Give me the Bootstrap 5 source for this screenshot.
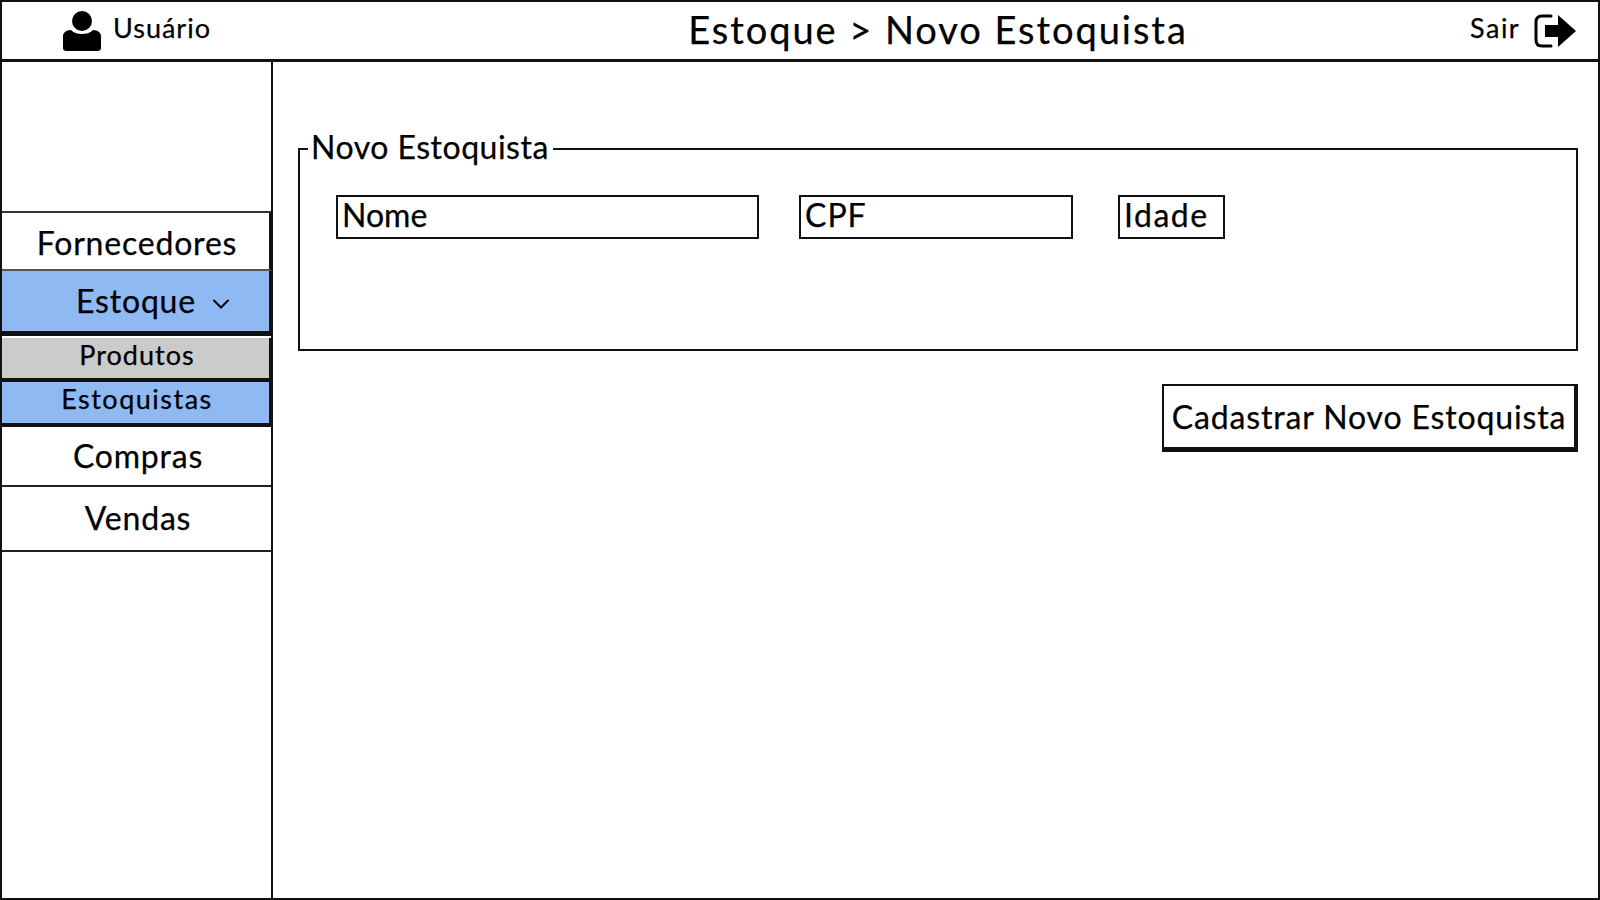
<!DOCTYPE html>
<html lang="pt-BR">
<head>
  <meta charset="UTF-8">
  <meta name="viewport" content="width=device-width, initial-scale=1">
  <title>Estoque - Novo Estoquista</title>
  <link href="https://cdn.jsdelivr.net/npm/bootstrap@5.3.0/dist/css/bootstrap.min.css" rel="stylesheet">
  <style>
    html, body { height: 100%; }
    body {
      font-family: "Lato", "Liberation Sans", sans-serif;
      color: #000;
      background: #fff;
      overflow: hidden;
      -webkit-text-stroke: .25px #000;
    }
    .wire-page {
      height: 900px;
      border: 2px solid #111;
    }
    .wire-top {
      display: grid;
      grid-template-columns: 404px 1fr 128px;
      align-items: center;
      height: 60px;
      border-bottom: 3px solid #111;
    }
    .wire-user { padding-left: 60px; gap: 11px; font-size: 27px; letter-spacing: 1px; }
    .wire-user span, .wire-exit span { padding-bottom: 4px; }
    .wire-title { font-size: 38px; letter-spacing: 1.95px; text-align: center; line-height: 1; padding-bottom: 3px; }
    .wire-exit { gap: 14px; font-size: 27px; letter-spacing: 1.5px; }
    .wire-body { height: 836px; }
    .wire-side {
      width: 271px;
      flex: none;
      border-right: 2px solid #111;
    }
    .wire-side-blank { height: 151px; border-bottom: 2px solid #333; }
    .wire-link {
      display: block;
      text-align: center;
      color: #000;
      text-decoration: none;
      font-size: 32px;
      letter-spacing: .8px;
      line-height: 1;
      padding-left: 3px;
    }
    .wire-forn { height: 58px; padding-top: 14px; border-bottom: 2px solid #555; border-right: 3px solid #111; margin-right: -1px; }
    .wire-estq { height: 65px; padding-top: 14px; padding-left: 35px; background: #8fb9f2; border-bottom: 5px solid #111; border-right: 3px solid #111; margin-right: -1px; }
    .wire-estq svg { margin-left: 7px; vertical-align: 4px; }
    .wire-sub {
      height: 44px;
      font-size: 27px;
      padding-top: 3px;
      border-right: 3px solid #111;
      border-bottom: 4px solid #111;
      margin-right: -1px;
    }
    .wire-sub-grey { background: #cbcbcb; margin-top: 2px; letter-spacing: 1px; }
    .wire-sub-blue { height: 45px; background: #8fb9f2; letter-spacing: 1.5px; }
    .wire-comp { height: 60px; padding-top: 13px; border-bottom: 2px solid #222; }
    .wire-vend { height: 65px; padding-top: 15px; border-bottom: 2px solid #222; }
    .wire-main { padding: 69px 20px 0 25px; }
    .wire-group {
      height: 220px;
      border: 2px solid #111;
      padding: 0 0 0 36px;
      margin: 0;
    }
    .wire-group legend {
      float: none;
      width: auto;
      margin: 0 0 0 -28px;
      padding: 0 4px 4px 3px;
      font-size: 32px;
      letter-spacing: .5px;
      line-height: 1;
    }
    .wire-fields { gap: 40px; padding-top: 28px; }
    .wire-field.form-control {
      height: 44px;
      padding: 0 4px 4px;
      border: 2px solid #111;
      border-radius: 0;
      font-size: 32px;
      color: #000;
      background: #fff;
      box-shadow: none;
    }
    .wire-nome { width: 423px; }
    .wire-cpf { width: 274px; letter-spacing: 1px; }
    .wire-idade { width: 107px; margin-left: 5px; letter-spacing: 1.5px; }
    .wire-save.btn {
      display: block;
      width: 416px;
      height: 68px;
      margin: 33px 0 0 auto;
      padding: 0;
      font-size: 32px;
      letter-spacing: .85px;
      color: #000;
      background: #fff;
      border: 2px solid #111;
      border-right-width: 4px;
      border-bottom-width: 5px;
      border-radius: 0;
    }
  </style>
</head>
<body>

<div class="wire-page d-flex flex-column">
  <!-- top bar -->
  <header class="wire-top">
    <div class="wire-user d-flex align-items-center">
      <svg width="40" height="42" viewBox="0 0 40 42" aria-hidden="true">
        <circle cx="20" cy="11" r="10" fill="#000"/>
        <path d="M1 26c0-3 3-6 8-6 3 3 7 4 11 4s8-1 11-4c5 0 8 3 8 6v12c0 2-1 3-4 3H5c-3 0-4-1-4-3z" fill="#000"/>
      </svg>
      <span>Usuário</span>
    </div>
    <div class="wire-title">Estoque &gt; Novo Estoquista</div>
    <div class="wire-exit d-flex align-items-center">
      <span>Sair</span>
      <svg width="43" height="34" viewBox="0 0 43 34" aria-hidden="true">
        <path d="M17 2H8C4 2 2 4 2 8v18c0 4 2 6 6 6h9" fill="none" stroke="#000" stroke-width="3" stroke-linecap="round"/>
        <path d="M11 11h13V1l18 16-18 16V23H11z" fill="#000"/>
      </svg>
    </div>
  </header>

  <div class="wire-body d-flex">
    <!-- sidebar -->
    <nav class="wire-side">
      <div class="wire-side-blank"></div>
      <a href="#" class="wire-link wire-forn">Fornecedores</a>
      <a href="#" class="wire-link wire-estq">Estoque
        <svg width="18" height="10" viewBox="0 0 18 10" aria-hidden="true"><path d="M2 1.5l7 7 7-7" fill="none" stroke="#000" stroke-width="2" stroke-linecap="round"/></svg>
      </a>
      <a href="#" class="wire-link wire-sub wire-sub-grey">Produtos</a>
      <a href="#" class="wire-link wire-sub wire-sub-blue">Estoquistas</a>
      <a href="#" class="wire-link wire-comp">Compras</a>
      <a href="#" class="wire-link wire-vend">Vendas</a>
    </nav>

    <!-- form -->
    <main class="wire-main flex-grow-1">
      <fieldset class="wire-group">
        <legend>Novo Estoquista</legend>
        <div class="wire-fields d-flex">
          <input class="form-control wire-field wire-nome" type="text" value="Nome">
          <input class="form-control wire-field wire-cpf" type="text" value="CPF">
          <input class="form-control wire-field wire-idade" type="text" value="Idade">
        </div>
      </fieldset>
      <button type="button" class="btn wire-save">Cadastrar Novo Estoquista</button>
    </main>
  </div>
</div>

<script src="https://cdn.jsdelivr.net/npm/bootstrap@5.3.0/dist/js/bootstrap.bundle.min.js"></script>
</body>
</html>
